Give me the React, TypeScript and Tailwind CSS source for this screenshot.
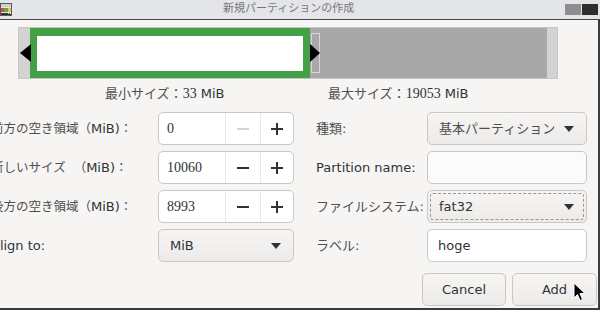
const font = "font-['DejaVu_Sans','Noto_Sans_CJK_JP',sans-serif]";
const num = "font-['Liberation_Serif','Noto_Sans_CJK_JP',serif] text-[14px]";
const cjk = "text-[#4f4f4f]";
const cjkSm = "text-[12.5px] text-[#4f4f4f]";

const DownArrow = () => (
  <svg width="10" height="6" viewBox="0 0 10 6">
    <polygon points="0,0 10,0 5,6" fill="#2e3436" />
  </svg>
);

const MinusIcon = ({ disabled }: { disabled?: boolean }) => (
  <svg width="12" height="12" viewBox="0 0 12 12">
    <rect x="0" y="5" width="12" height="2" fill={disabled ? "#d6d3d0" : "#2e3436"} />
  </svg>
);

const PlusIcon = () => (
  <svg width="12" height="12" viewBox="0 0 12 12">
    <rect x="0" y="5" width="12" height="2" fill="#2e3436" />
    <rect x="5" y="0" width="2" height="12" fill="#2e3436" />
  </svg>
);

const SpinBox = ({ value, minusOff }: { value: string; minusOff?: boolean }) => (
  <div className="flex h-[33px] w-[136px] rounded-[5px] border border-[#cdc7c2] bg-white">
    <div className={`flex w-[66px] items-center pl-[8px] ${num}`}>{value}</div>
    <div className="flex w-[35px] items-center justify-center border-l border-[#ebe8e5]">
      <MinusIcon disabled={minusOff} />
    </div>
    <div className="flex flex-1 items-center justify-center border-l border-[#ebe8e5]">
      <PlusIcon />
    </div>
  </div>
);

const Combo = ({
  children,
  width,
  focused,
}: {
  children: React.ReactNode;
  width: string;
  focused?: boolean;
}) => (
  <div
    className={`relative flex h-[33px] ${width} items-center justify-between rounded-[5px] border border-[#cdc7c2] bg-gradient-to-b from-[#f6f5f4] to-[#edebe9] pl-[11px] pr-[12px]`}
  >
    {focused && (
      <div className="absolute inset-[2px] rounded-[3px] border border-dashed border-[#9a9692]" />
    )}
    <span className="relative">{children}</span>
    <span className="relative">
      <DownArrow />
    </span>
  </div>
);

const Entry = ({ value, tint }: { value?: string; tint?: boolean }) => (
  <div
    className={`flex h-[33px] w-[160px] items-center rounded-[5px] border border-[#cdc7c2] pl-[10px] ${
      tint ? "bg-[#fcfbfb]" : "bg-white"
    }`}
  >
    {value}
  </div>
);

const Row = ({
  left,
  leftCtl,
  right,
  rightCtl,
}: {
  left: React.ReactNode;
  leftCtl: React.ReactNode;
  right: React.ReactNode;
  rightCtl: React.ReactNode;
}) => (
  <div className="flex h-[33px] items-center">
    <div className="w-[131px] whitespace-nowrap">
      <div className="ml-[-9px]">{left}</div>
    </div>
    <div className="ml-[27px]">{leftCtl}</div>
    <div className="ml-[22px] w-[111px] whitespace-nowrap">{right}</div>
    {rightCtl}
  </div>
);

const AppIcon = () => (
  <svg width="12" height="13" viewBox="0 0 12 13">
    <rect x="0" y="0" width="12" height="13" fill="#5a5a5a" />
    <rect x="1" y="1" width="10" height="3" fill="#cfcfcf" />
    <rect x="1" y="4" width="10" height="6" fill="#e8e8e8" />
    <rect x="1" y="5" width="3" height="4" fill="#d24a3c" />
    <rect x="4" y="5" width="4" height="4" fill="#5bab4a" />
    <rect x="8" y="5" width="3" height="4" fill="#e8c548" />
    <rect x="1" y="10" width="10" height="2" fill="#333" />
    <rect x="8" y="10" width="1" height="1" fill="#ddd" />
    <rect x="10" y="10" width="1" height="1" fill="#ddd" />
  </svg>
);

const Cursor = () => (
  <svg width="13" height="20" viewBox="0 0 13 20">
    <path
      d="M1 1 L1 16 L4.5 12.5 L7 18.5 L9.5 17.5 L7 11.5 L12 11.5 Z"
      fill="#000"
      stroke="#fff"
      strokeWidth="1"
      strokeLinejoin="round"
    />
  </svg>
);

export default function App() {
  return (
    <div
      className={`relative flex h-[310px] w-[600px] flex-col overflow-hidden bg-[#f6f5f4] text-[13px] text-[#2e3436] ${font}`}
    >
      {/* title bar */}
      <div className="flex h-[20px] shrink-0 items-center border-b border-[#4a4a4a] bg-[#e4e5e9]">
        <div className="w-[12px]">
          <AppIcon />
        </div>
        <div className="ml-[211px] text-[11px] text-[#777]">新規パーティションの作成</div>
        <div className="ml-auto flex gap-[1px] self-start pt-[4px] pr-[2px]">
          <div className="h-[11px] w-[16px] bg-[#8e8e8e]" />
          <div className="h-[11px] w-[16px] bg-[#2e2e2e]" />
        </div>
      </div>

      <div className="flex-1 border-r-2 border-b-2 border-[#3c3c3c]">
        {/* partition map */}
        <div className="relative mt-[7px] ml-[18px] flex h-[52px] w-[540px] border border-[#c6c6c6] bg-[#d3d3d3]">
          <div className="w-[11px]" />
          <div className="w-[280px] border-[7px] border-t-[8px] border-[#43a047] bg-white" />
          <div className="w-[237px] bg-[#a8a8a8]" />
          <div className="w-[10px]" />
          <div className="absolute left-[292px] top-[5px] h-[40px] w-[9px] border border-[#d6d6d6]" />
          <svg className="absolute left-[1px] top-[16px]" width="11" height="18" viewBox="0 0 11 18">
            <polygon points="0,9 11,0 11,18" fill="#000" />
          </svg>
          <svg className="absolute left-[291px] top-[16px]" width="10" height="18" viewBox="0 0 10 18">
            <polygon points="0,0 10,9 0,18" fill="#000" />
          </svg>
        </div>

        {/* min / max */}
        <div className="mt-[6px] flex h-[16px] items-center whitespace-nowrap">
          <div className="w-[328px] pl-[105px]">
            <span className={cjk}>最小サイズ：</span>
            <span className={num}>33</span> MiB
          </div>
          <div>
            <span className={cjk}>最大サイズ：</span>
            <span className={num}>19053</span> MiB
          </div>
        </div>

        {/* form */}
        <div className="mt-[11px] flex flex-col gap-[6px]">
          <Row
            left={
              <span>
                <span className={cjkSm}>前方の空き領域（</span>MiB)<span className={cjkSm}>：</span>
              </span>
            }
            leftCtl={<SpinBox value="0" minusOff />}
            right={<span className={cjk}>種類:</span>}
            rightCtl={
              <Combo width="w-[160px]">
                <span className={cjk}>基本パーティション</span>
              </Combo>
            }
          />
          <Row
            left={
              <span>
                <span className={cjkSm}>新しいサイズ</span>
                <span className="inline-block w-[8px]" />
                <span className={cjkSm}>（</span>MiB)<span className={cjkSm}>：</span>
              </span>
            }
            leftCtl={<SpinBox value="10060" />}
            right={<span>Partition name:</span>}
            rightCtl={<Entry tint />}
          />
          <Row
            left={
              <span>
                <span className={cjkSm}>後方の空き領域（</span>MiB)<span className={cjkSm}>：</span>
              </span>
            }
            leftCtl={<SpinBox value="8993" />}
            right={<span className={cjk}>ファイルシステム:</span>}
            rightCtl={
              <Combo width="w-[160px]" focused>
                fat32
              </Combo>
            }
          />
          <Row
            left={<span>Align to:</span>}
            leftCtl={<Combo width="w-[136px]">MiB</Combo>}
            right={<span className={cjk}>ラベル:</span>}
            rightCtl={<Entry value="hoge" />}
          />
        </div>

        {/* buttons */}
        <div className="mt-[11px] flex justify-end gap-[6px] pr-[1px]">
          <button className="h-[33px] w-[84px] rounded-[5px] border border-[#cdc7c2] bg-gradient-to-b from-[#f6f5f4] to-[#edebe9]">
            Cancel
          </button>
          <button className="h-[33px] w-[85px] rounded-[5px] border border-[#cdc7c2] bg-gradient-to-b from-[#f6f5f4] to-[#edebe9]">
            Add
          </button>
        </div>
      </div>

      <div className="absolute left-[573px] top-[282px]">
        <Cursor />
      </div>
    </div>
  );
}
